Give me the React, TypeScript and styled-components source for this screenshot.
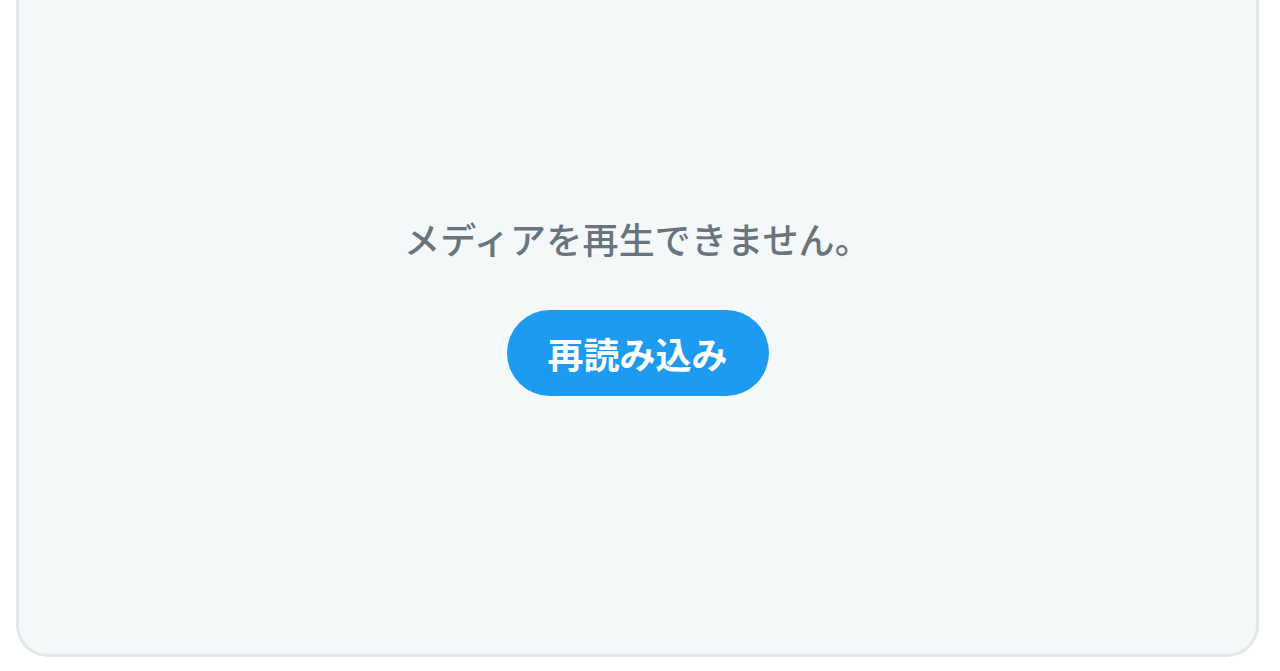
import styled, { createGlobalStyle } from "styled-components";

const GlobalStyle = createGlobalStyle`
  html, body {
    margin: 0;
    padding: 0;
    background: #ffffff;
    font-family: "Noto Sans CJK JP", "Noto Sans", sans-serif;
  }
`;

const Page = styled.div`
  width: 1280px;
  height: 671px;
  box-sizing: border-box;
  padding: 0 21px 0 16px;
  overflow: hidden;
`;

const Card = styled.div`
  height: 657px;
  box-sizing: border-box;
  background: #f5f8f8;
  border: 3px solid #e3e7ea;
  border-top: none;
  border-radius: 0 0 32px 32px;
  display: flex;
  flex-direction: column;
  align-items: center;
  padding-top: 213px;
`;

const Message = styled.p`
  margin: 0;
  font-size: 36px;
  font-weight: 500;
  line-height: 50px;
  color: #68757f;
  letter-spacing: 0.2px;
`;

const ReloadButton = styled.button`
  margin-top: 47px;
  width: 262px;
  height: 86px;
  border: none;
  border-radius: 43px;
  background: #1d9bf0;
  color: #ffffff;
  font-family: inherit;
  font-size: 36px;
  font-weight: 700;
  cursor: pointer;
`;

export default function App() {
  return (
    <>
      <GlobalStyle />
      <Page>
        <Card>
          <Message>メディアを再生できません。</Message>
          <ReloadButton>再読み込み</ReloadButton>
        </Card>
      </Page>
    </>
  );
}
